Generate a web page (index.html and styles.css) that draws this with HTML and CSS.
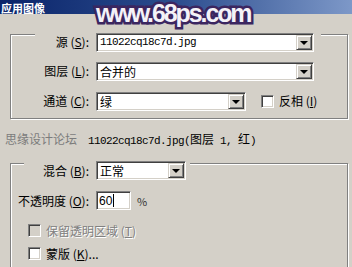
FILE: index.html
```html
<!DOCTYPE html>
<html>
<head lang="zh">
    <meta charset="UTF-8">
    <title>应用图像</title>
    <link rel="stylesheet" href="styles.css">
</head>
<body>
<div class="dialog">
    <div class="titlebar"><strong>应用图像</strong></div>
    <div class="watermark">www.68ps.com</div>

    <div class="group source">
        <div class="legend legend-source">
            <span class="label label-source">源 (<u>S</u>):</span>
            <div class="select select-wide"><span class="value mono">11022cq18c7d.jpg</span><i class="arrow"></i></div>
        </div>
        <div class="row row-layer">
            <span class="label">图层 (<u>L</u>):</span>
            <div class="select select-wide"><span class="value">合并的</span><i class="arrow"></i></div>
        </div>
        <div class="row row-channel">
            <span class="label">通道 (<u>C</u>):</span>
            <div class="select select-mid"><span class="value">绿</span><i class="arrow"></i></div>
            <span class="check check-invert"></span>
            <span class="check-text">反相 (<u>I</u>)</span>
        </div>
    </div>

    <div class="target"><span class="target-mark">思缘设计论坛</span><span class="mono">11022cq18c7d.jpg(</span>图层<span class="mono"> 1, </span>红<span class="mono">)</span></div>

    <div class="group blend">
        <div class="legend legend-blend">
            <span class="label label-blend">混合 (<u>B</u>):</span>
            <div class="select select-small"><span class="value">正常</span><i class="arrow"></i></div>
        </div>
        <div class="row row-opacity">
            <span class="label">不透明度 (<u>O</u>):</span>
            <div class="input"><span class="input-text">60</span><i class="caret"></i></div>
            <span class="pct">%</span>
        </div>
        <div class="row row-check row-preserve">
            <span class="check check-disabled"></span>
            <span class="check-text disabled">保留透明区域 (<u>T</u>)</span>
        </div>
        <div class="row row-check row-mask">
            <span class="check"></span>
            <span class="check-text">蒙版 (<u>K</u>)...</span>
        </div>
    </div>
</div>
</body>
</html>
```

FILE: styles.css
```css
html, body {
    margin: 0;
    padding: 0;
}
body {
    width: 352px;
    height: 267px;
    overflow: hidden;
    background: #d4d0c8;
    font-family: "Noto Sans CJK SC", "Liberation Sans", sans-serif;
    font-size: 12px;
    line-height: 14px;
    color: #000;
}
u {
    text-decoration: underline;
    text-underline-offset: 1px;
}
.dialog {
    position: relative;
    height: 267px;
}
.titlebar {
    height: 14px;
    box-sizing: border-box;
    padding: 2px 0 0 1px;
    background: linear-gradient(90deg, #0a246a 0%, #2c4d8e 50%, #7d98c8 100%);
    color: #fff;
    font-size: 11px;
    line-height: 12px;
}
.titlebar strong {
    font-weight: 700;
}
.watermark {
    position: absolute;
    top: 1px;
    left: 96px;
    font-family: "Liberation Sans", sans-serif;
    font-weight: 700;
    font-size: 25px;
    line-height: 24px;
    letter-spacing: -2.1px;
    color: #f4f2f8;
    -webkit-text-stroke: 5px #3b2660;
    paint-order: stroke fill;
}

/* etched group boxes */
.group {
    margin-left: 10px;
    width: 338px;
    box-sizing: border-box;
    border: 1px solid #808080;
    box-shadow: inset 1px 1px #fff, 1px 1px #fff;
}
.source {
    margin-top: 20px;
    padding-bottom: 7px;
}
.blend {
    margin-top: 17px;
    padding-bottom: 12px;
}
.legend {
    display: inline-flex;
    align-items: center;
    background: #d4d0c8;
    position: relative;
}
.legend-source {
    margin-top: -7px;
    margin-left: 24px;
    padding-right: 7px;
}
.legend-blend {
    margin-top: -11px;
    margin-left: 13px;
    padding-right: 4px;
}
.row {
    display: flex;
    align-items: center;
}
.label {
    width: 78px;
    margin-right: 7px;
    text-align: right;
    white-space: nowrap;
}
.label-source {
    width: 54px;
}
.label-blend {
    width: 65px;
}
.row-layer {
    margin-top: 10px;
}
.row-channel {
    margin-top: 11px;
}

/* combo boxes */
.select, .input {
    box-sizing: border-box;
    height: 19px;
    display: flex;
    align-items: center;
    background: #fff;
    border: 1px solid;
    border-color: #808080 #fff #fff #808080;
    box-shadow: inset 1px 1px #404040, inset -1px -1px #d4d0c8;
}
.select-wide {
    width: 218px;
}
.select-mid {
    width: 150px;
}
.select-small {
    width: 90px;
}
.value {
    flex: 1;
    padding-left: 3px;
    line-height: 17px;
    white-space: nowrap;
}
.mono {
    font-family: "Liberation Mono", monospace;
    font-size: 11px;
    letter-spacing: -0.6px;
}
.arrow {
    width: 16px;
    height: 15px;
    margin: 1px 1px 1px 0;
    box-sizing: border-box;
    background: #d4d0c8;
    border: 1px solid;
    border-color: #d4d0c8 #404040 #404040 #d4d0c8;
    box-shadow: inset 1px 1px #fff, inset -1px -1px #808080;
    display: flex;
    align-items: center;
    justify-content: center;
}
.arrow::after {
    content: "";
    width: 0;
    height: 0;
    margin-top: 1px;
    border-left: 4px solid transparent;
    border-right: 4px solid transparent;
    border-top: 4px solid #000;
}

/* check boxes */
.check {
    width: 13px;
    height: 13px;
    box-sizing: border-box;
    background: #fff;
    border: 1px solid;
    border-color: #808080 #fff #fff #808080;
    box-shadow: inset 1px 1px #404040, inset -1px -1px #d4d0c8;
}
.check-disabled {
    background: #d4d0c8;
}
.check-text {
    margin-left: 5px;
    white-space: nowrap;
}
.check-invert {
    margin-left: 15px;
}
.disabled {
    color: #808080;
    text-shadow: 1px 1px #fff;
}

.target {
    margin-top: 13px;
    height: 14px;
    padding-left: 5px;
    white-space: nowrap;
}
.target-mark {
    display: inline-block;
    width: 83px;
    color: #7c7c7c;
}

.row-opacity {
    margin-top: 11px;
}
.input {
    width: 35px;
    padding-left: 2px;
}
.input-text {
    font-family: "Liberation Sans", sans-serif;
    font-size: 12px;
}
.caret {
    width: 1px;
    height: 13px;
    background: #000;
    margin-left: 1px;
}
.pct {
    margin-left: 6px;
    font-size: 11px;
    color: #333;
}
.row-check {
    height: 13px;
    padding-left: 17px;
}
.row-preserve {
    margin-top: 14px;
}
.row-mask {
    margin-top: 10px;
}
```
